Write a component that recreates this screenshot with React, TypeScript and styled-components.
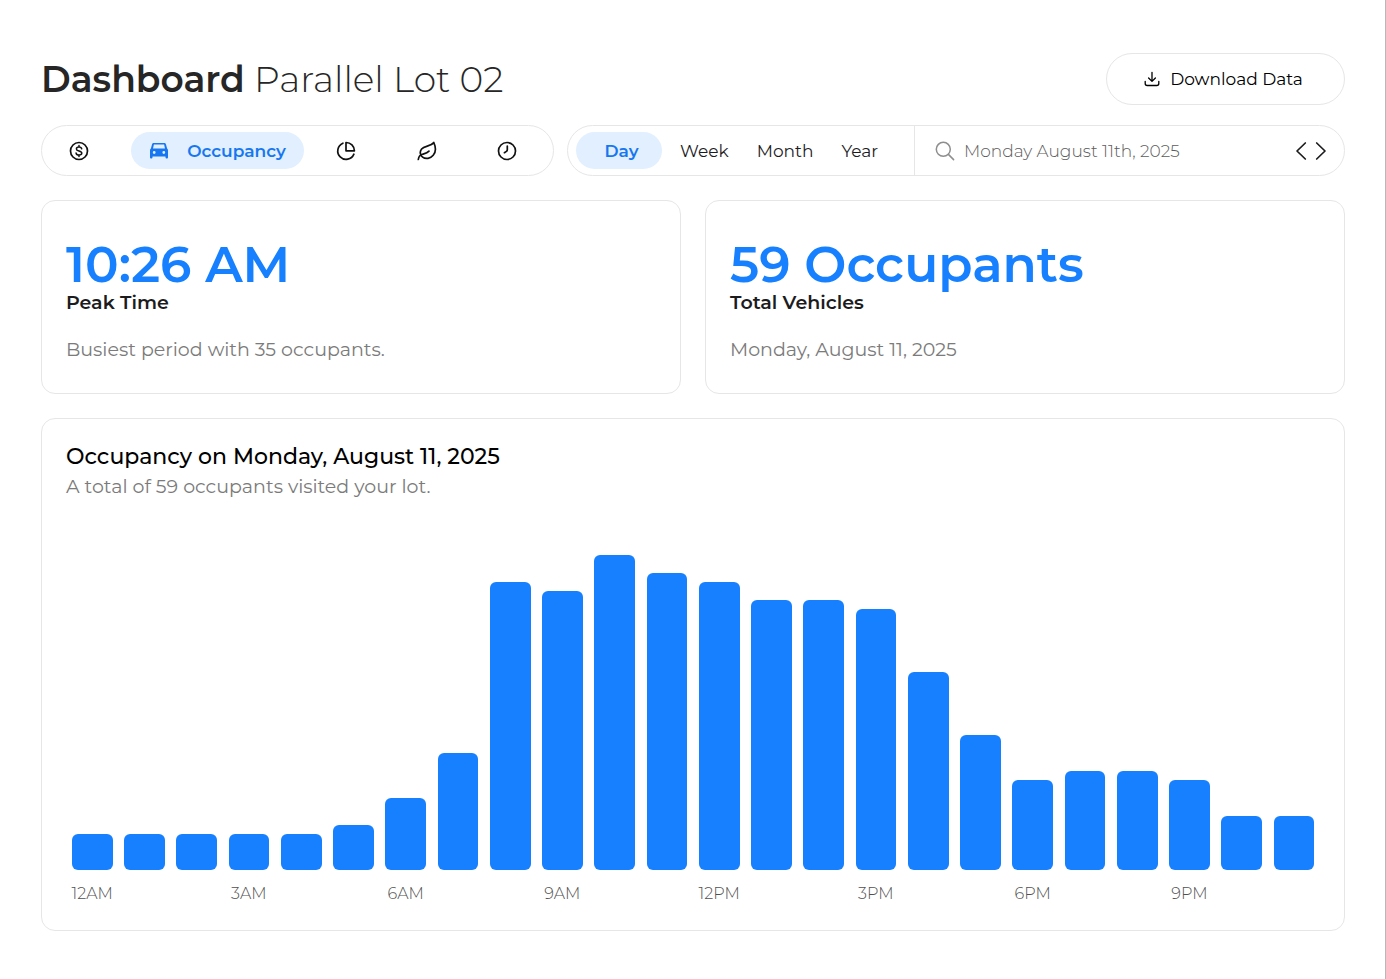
import React from 'react';
import styled, { createGlobalStyle, css } from 'styled-components';

const GlobalStyle = createGlobalStyle`
  *, *::before, *::after { box-sizing: border-box; }
  body {
    margin: 0;
    background: #fff;
    color: #1c1c1e;
    font-family: Montserrat, Inter, sans-serif;
  }
  button, input { font: inherit; color: inherit; }
  h1, h2, p { margin: 0; }
`;

const line = '#e6e6e6';
const blue = '#1680ff';

const Page = styled.main`
  min-height: 100vh;
  padding: 53px 40px 48px 41px;
  border-right: 1px solid #b8b8b8;
`;

const Header = styled.header`
  display: flex;
  align-items: center;
  justify-content: space-between;
  margin-bottom: 20px;
`;

const Title = styled.h1`
  color: #262626;
  font-size: 36px;
  line-height: 52px;
  font-weight: 300;
  strong { font-weight: 600; }
`;

const DownloadButton = styled.button`
  display: flex;
  align-items: center;
  justify-content: center;
  gap: 10px;
  width: 239px;
  height: 52px;
  padding: 0 6px 0 2px;
  border: 1px solid ${line};
  border-radius: 26px;
  background: #fff;
  color: #000;
  font-size: 17px;
  cursor: pointer;
`;

const Toolbar = styled.div`
  display: grid;
  grid-template-columns: 513fr 778fr;
  gap: 13px;
  margin-bottom: 24px;
`;

const Pill = styled.div`
  display: flex;
  height: 51px;
  border: 1px solid ${line};
  border-radius: 26px;
`;

const Views = styled.nav`
  display: grid;
  grid-template-columns: 74fr 188fr 84fr 78fr 82fr;
  align-items: center;
  flex: 1;
  padding-right: 5px;
`;

const active = css`
  background: #e2efff;
  color: #1677f0;
  font-weight: 600;
`;

const ViewButton = styled.button<{ $active?: boolean }>`
  display: flex;
  align-items: center;
  justify-content: center;
  justify-self: ${(p) => (p.$active ? 'end' : 'center')};
  gap: 18px;
  height: 37px;
  padding: 0 18px;
  border: 0;
  border-radius: 19px;
  background: none;
  color: #111;
  font-size: 17px;
  cursor: pointer;
  ${(p) => p.$active && css`${active} width: 173px;`}
`;

const Periods = styled.div`
  display: flex;
  align-items: center;
  width: 347px;
  padding-left: 8px;
  border-right: 1px solid ${line};
`;

const PeriodButton = styled.button<{ $active?: boolean }>`
  height: 37px;
  padding: 0 14px;
  border: 0;
  border-radius: 19px;
  background: none;
  font-size: 17px;
  cursor: pointer;
  ${(p) => p.$active && css`${active} width: 86px; margin-right: 4px; padding: 0 11px 0 16px;`}
`;

const DateSearch = styled.label`
  display: flex;
  align-items: center;
  flex: 1;
  gap: 9px;
  padding-left: 20px;
  color: #8e8e8e;
`;

const DateInput = styled.input`
  flex: 1;
  min-width: 0;
  padding: 0;
  border: 0;
  outline: 0;
  background: none;
  color: #5c5c5c;
  font-size: 17px;
  font-weight: 300;
`;

const Steps = styled.div`
  display: flex;
  align-items: center;
  padding-right: 13px;
`;

const StepButton = styled.button`
  display: flex;
  justify-content: center;
  width: 20px;
  padding: 0;
  border: 0;
  background: none;
  cursor: pointer;
`;

const Stats = styled.div`
  display: grid;
  grid-template-columns: 1fr 1fr;
  gap: 24px;
  margin-bottom: 24px;
`;

const Card = styled.section`
  padding: 24px;
  border: 1px solid ${line};
  border-radius: 14px;
`;

const StatCard = styled(Card)`
  padding: 38px 24px 29px;
`;

const StatValue = styled.p`
  color: ${blue};
  font-size: 50px;
  line-height: 52px;
  font-weight: 600;
`;

const StatLabel = styled.h2`
  margin-bottom: 21px;
  font-size: 19px;
  line-height: 24px;
  font-weight: 600;
`;

const Note = styled.p`
  color: #7b7b7b;
  font-size: 19px;
  line-height: 28px;
  font-weight: 400;
`;

const ChartTitle = styled.h2`
  margin-bottom: 2px;
  color: #000;
  font-size: 22px;
  line-height: 28px;
  font-weight: 500;
`;

const Chart = styled.div`
  display: grid;
  grid-template-columns: repeat(24, 1fr);
  margin-top: 54px;
`;

const Hour = styled.div`
  display: flex;
  flex-direction: column;
  align-items: center;
`;

const Track = styled.div`
  display: flex;
  align-items: flex-end;
  width: 78%;
  height: 315px;
`;

const Bar = styled.div`
  width: 100%;
  border-radius: 6px;
  background: ${blue};
`;

const Tick = styled.span`
  height: 36px;
  padding-top: 14px;
  color: #505050;
  font-size: 16px;
  line-height: 20px;
  font-weight: 300;
  white-space: nowrap;
`;

const Drawing = styled.svg`
  display: block;
  flex: none;
  fill: none;
  stroke: currentColor;
  stroke-linecap: round;
  stroke-linejoin: round;
`;

const DollarIcon = () => (
  <Drawing width="20" height="20" viewBox="0 0 20 20" strokeWidth="1.7">
    <circle cx="10" cy="10" r="8.5" />
    <path strokeWidth="1.5" d="M12.7 7.8C12.5 6.6 11.5 5.9 10 5.9S7.4 6.7 7.4 7.9c0 1.3 1.1 1.7 2.6 2.1s2.8.8 2.8 2.1-1.2 2-2.8 2-2.7-.8-2.9-2M10 4.6v1.3M10 14.1v1.3" />
  </Drawing>
);

const CarIcon = () => (
  <Drawing width="20" height="18" viewBox="0 0 20 18">
    <path
      fill="currentColor"
      stroke="none"
      fillRule="evenodd"
      d="M5 1h10c1 0 1.700.5 2 1.400l1.100 4.200c.6.5.9 1.100.9 1.900v6.700c0 .8-.5 1.300-1.200 1.300s-1.300-.5-1.300-1.300v-.7h-13v.7c0 .8-.6 1.300-1.300 1.300S1 16 1 15.200V8.500c0-.8.3-1.400.9-1.900L3 2.400C3.300 1.500 4 1 5 1ZM4.900 2.600 4 6.500h12l-.9-3.900ZM5.200 9.100a1.400 1.400 0 1 0 0 2.800 1.400 1.400 0 0 0 0-2.800Zm9.600 0a1.400 1.400 0 1 0 0 2.800 1.400 1.400 0 0 0 0-2.800Z"
    />
  </Drawing>
);

const PieIcon = () => (
  <Drawing width="20" height="20" viewBox="0 0 20 20" strokeWidth="1.7">
    <path d="M6.900 2.200a8.400 8.400 0 1 0 11 11" />
    <path d="M10 1.500v8.300h8.400A8.300 8.300 0 0 0 10 1.500Z" />
  </Drawing>
);

const LeafIcon = () => (
  <Drawing width="20" height="20" viewBox="0 0 20 20" strokeWidth="1.7">
    <path d="M16.800 1.500c2 4.500 2.200 9.500-.6 12.800-2.600 3.300-7.600 4.100-10.600 1.800-2.500-1.900-3.200-5.300-1-8.100C7.400 4.400 13.700 5.700 16.800 1.500Z" />
    <path d="M1.300 18.500c.4-2.700 1.700-4.600 4-5.200 2.500-.7 5-1.200 6.700-3.200" />
  </Drawing>
);

const ClockIcon = () => (
  <Drawing width="20" height="20" viewBox="0 0 20 20" strokeWidth="1.7">
    <circle cx="10" cy="10" r="8.5" />
    <path d="M10.300 5v3.700c0 .8-.3 1.300-.9 1.700l-2 1.300" />
  </Drawing>
);

const DownloadIcon = () => (
  <Drawing width="16" height="16" viewBox="0 0 16 16" strokeWidth="1.3">
    <path d="M8 1.300v8.900M4.600 7 8 10.400 11.400 7M1.200 10.300v2.200c0 1.300.7 2 2 2h9.600c1.300 0 2-.7 2-2v-2.200" />
  </Drawing>
);

const SearchIcon = () => (
  <Drawing width="20" height="20" viewBox="0 0 20 20" strokeWidth="1.5">
    <circle cx="8.300" cy="8.300" r="7" />
    <path d="m13.400 13.400 5.200 5.200" />
  </Drawing>
);

const Chevron = ({ d }: { d: string }) => (
  <Drawing width="12" height="20" viewBox="0 0 12 20" strokeWidth="1.7">
    <path d={d} />
  </Drawing>
);

const counts = [4, 4, 4, 4, 4, 5, 8, 13, 32, 31, 35, 33, 32, 30, 30, 29, 22, 15, 10, 11, 11, 10, 6, 6];
const peak = Math.max(...counts);

const hourName = (h: number) => `${h % 12 || 12}${h < 12 ? 'AM' : 'PM'}`;

const periods = ['Day', 'Week', 'Month', 'Year'];

export default function App() {
  return (
    <>
      <GlobalStyle />
      <Page>
        <Header>
          <Title><strong>Dashboard</strong> Parallel Lot 02</Title>
          <DownloadButton type="button"><DownloadIcon />Download Data</DownloadButton>
        </Header>

        <Toolbar>
          <Pill>
            <Views aria-label="Views">
              <ViewButton type="button" aria-label="Revenue"><DollarIcon /></ViewButton>
              <ViewButton type="button" $active><CarIcon />Occupancy</ViewButton>
              <ViewButton type="button" aria-label="Breakdown"><PieIcon /></ViewButton>
              <ViewButton type="button" aria-label="Emissions"><LeafIcon /></ViewButton>
              <ViewButton type="button" aria-label="Duration"><ClockIcon /></ViewButton>
            </Views>
          </Pill>
          <Pill>
            <Periods>
              {periods.map((name) => (
                <PeriodButton key={name} type="button" $active={name === 'Day'}>{name}</PeriodButton>
              ))}
            </Periods>
            <DateSearch>
              <SearchIcon />
              <DateInput type="text" aria-label="Date" defaultValue="Monday August 11th, 2025" />
            </DateSearch>
            <Steps>
              <StepButton type="button" aria-label="Previous day"><Chevron d="M10.300 2 2 10l8.300 8" /></StepButton>
              <StepButton type="button" aria-label="Next day"><Chevron d="M1.700 2 10 10l-8.300 8" /></StepButton>
            </Steps>
          </Pill>
        </Toolbar>

        <Stats>
          <StatCard>
            <StatValue>10:26 AM</StatValue>
            <StatLabel>Peak Time</StatLabel>
            <Note>Busiest period with 35 occupants.</Note>
          </StatCard>
          <StatCard>
            <StatValue>59 Occupants</StatValue>
            <StatLabel>Total Vehicles</StatLabel>
            <Note>Monday, August 11, 2025</Note>
          </StatCard>
        </Stats>

        <Card>
          <ChartTitle>Occupancy on Monday, August 11, 2025</ChartTitle>
          <Note>A total of 59 occupants visited your lot.</Note>
          <Chart>
            {counts.map((count, hour) => (
              <Hour key={hour}>
                <Track><Bar style={{ height: `${(count / peak) * 100}%` }} /></Track>
                <Tick>{hour % 3 === 0 ? hourName(hour) : ''}</Tick>
              </Hour>
            ))}
          </Chart>
        </Card>
      </Page>
    </>
  );
}
